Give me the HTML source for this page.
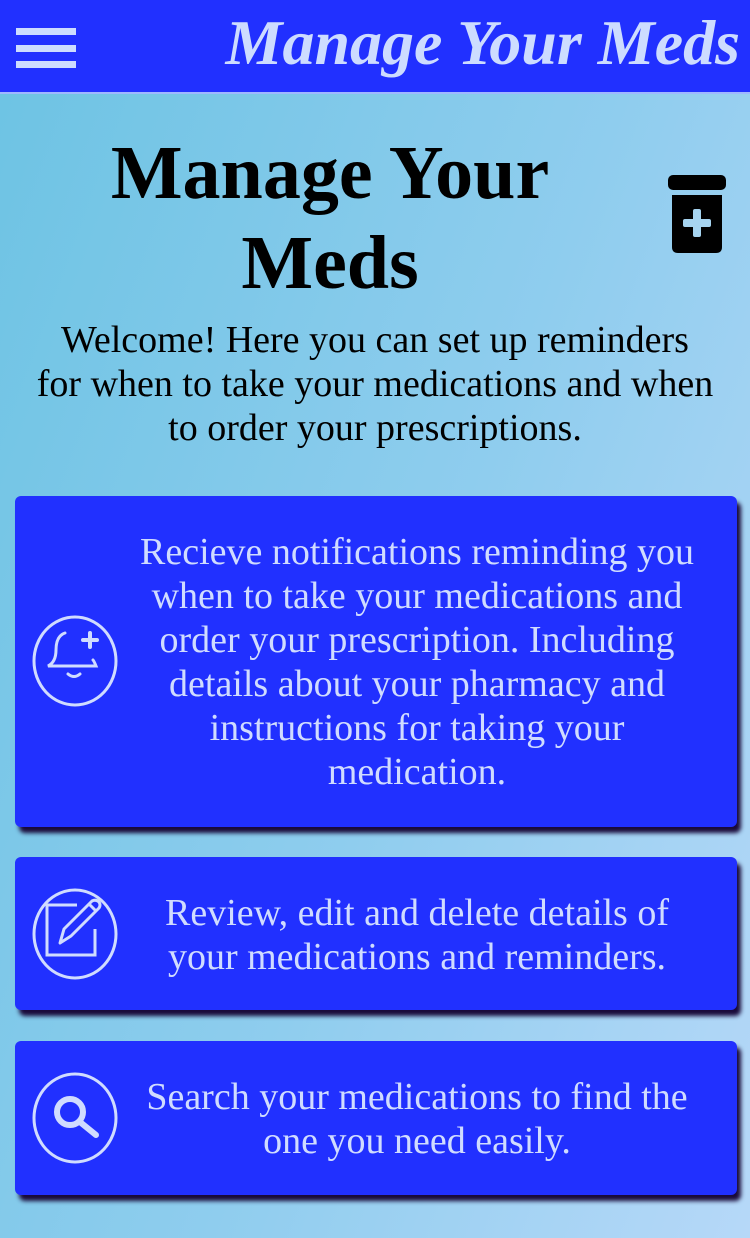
<!DOCTYPE html>
<html><head><meta charset="utf-8"><style>
*{margin:0;padding:0;box-sizing:border-box}
body{width:750px;height:1238px;overflow:hidden;font-family:"Liberation Serif",serif;background:linear-gradient(110deg,#6cc3e3 0%,#8fcdee 55%,#b6d8f8 100%);position:relative}
.hdr{position:absolute;left:0;top:0;width:750px;height:94px;background:#2130ff;border-bottom:2px solid #9fb8ff}
.bar{position:absolute;left:16px;width:60px;height:7px;background:#cddcff}
.ht{position:absolute;right:10px;top:6px;font-size:64px;font-weight:bold;font-style:italic;color:#cddcff;white-space:nowrap}
h1{position:absolute;left:30px;width:600px;top:128px;text-align:center;font-size:76px;line-height:90px;font-weight:bold;color:#000}
.wel{position:absolute;left:0;width:750px;top:318px;text-align:center;font-size:38px;line-height:44px;color:#000;white-space:nowrap}
.card{position:absolute;left:15px;width:722px;background:#2130ff;border-radius:6px;box-shadow:4px 6px 4px #1a0a3a;color:#d0dcff;font-size:38px;line-height:44px}
.card .t{position:absolute;left:118px;right:36px;text-align:center}
.card svg{position:absolute;left:17px}
</style></head><body>
<div class="hdr">
<div class="bar" style="top:28px"></div><div class="bar" style="top:45px"></div><div class="bar" style="top:61px"></div>
<div class="ht">Manage Your Meds</div>
</div>
<h1>Manage Your<br>Meds</h1>
<svg style="position:absolute;left:668px;top:175px" width="60" height="80" viewBox="0 0 60 80">
<rect x="0" y="0" width="58" height="15" rx="5" fill="#000"/>
<path d="M4 20 H54 V72 Q54 78 48 78 H10 Q4 78 4 72 Z" fill="#000"/>
<rect x="25" y="34" width="8" height="28" rx="2" fill="#a6d4f0"/>
<rect x="15" y="44" width="28" height="8" rx="2" fill="#a6d4f0"/>
</svg>
<div class="wel">Welcome! Here you can set up reminders<br>for when to take your medications and when<br>to order your prescriptions.</div>

<div class="card" style="top:496px;height:331px">
<svg style="top:118px" width="86" height="94" viewBox="0 0 86 94"><ellipse cx="43" cy="47" rx="41" ry="44" fill="none" stroke="#d0dcff" stroke-width="3"/>
<path d="M33 19 Q24 22 24 36 Q24 48 16 52 L64 52 Q62 47 61 46" fill="none" stroke="#d0dcff" stroke-width="3" stroke-linecap="round"/>
<path d="M36 60 Q42 65 48 60" fill="none" stroke="#d0dcff" stroke-width="3" stroke-linecap="round"/>
<path d="M58 19 V33 M51 26 H65" stroke="#d0dcff" stroke-width="4" stroke-linecap="round"/></svg>
<div class="t" style="top:34px">Recieve notifications reminding you when to take your medications and order your prescription. Including details about your pharmacy and instructions for taking your medication.</div>
</div>

<div class="card" style="top:857px;height:153px">
<svg style="top:30px" width="86" height="94" viewBox="0 0 86 94"><ellipse cx="43" cy="47" rx="41" ry="44" fill="none" stroke="#d0dcff" stroke-width="3"/>
<path d="M45 18 H15 V68 H63 V42" fill="none" stroke="#d0dcff" stroke-width="3"/>
<path d="M28 56 L32 42 L60 14 Q64 12 67 15 Q69 18 67 21 L39 49 Z M57 17 L64 24" fill="none" stroke="#d0dcff" stroke-width="3" stroke-linejoin="round"/></svg>
<div class="t" style="top:34px">Review, edit and delete details of your medications and reminders.</div>
</div>

<div class="card" style="top:1041px;height:154px">
<svg style="top:30px" width="86" height="94" viewBox="0 0 86 94"><ellipse cx="43" cy="47" rx="41" ry="44" fill="none" stroke="#d0dcff" stroke-width="3"/>
<circle cx="38" cy="41" r="13" fill="none" stroke="#d0dcff" stroke-width="6"/>
<path d="M48 51 L64 64" stroke="#d0dcff" stroke-width="6" stroke-linecap="round"/></svg>
<div class="t" style="top:34px">Search your medications to find the one you need easily.</div>
</div>
</body></html>
